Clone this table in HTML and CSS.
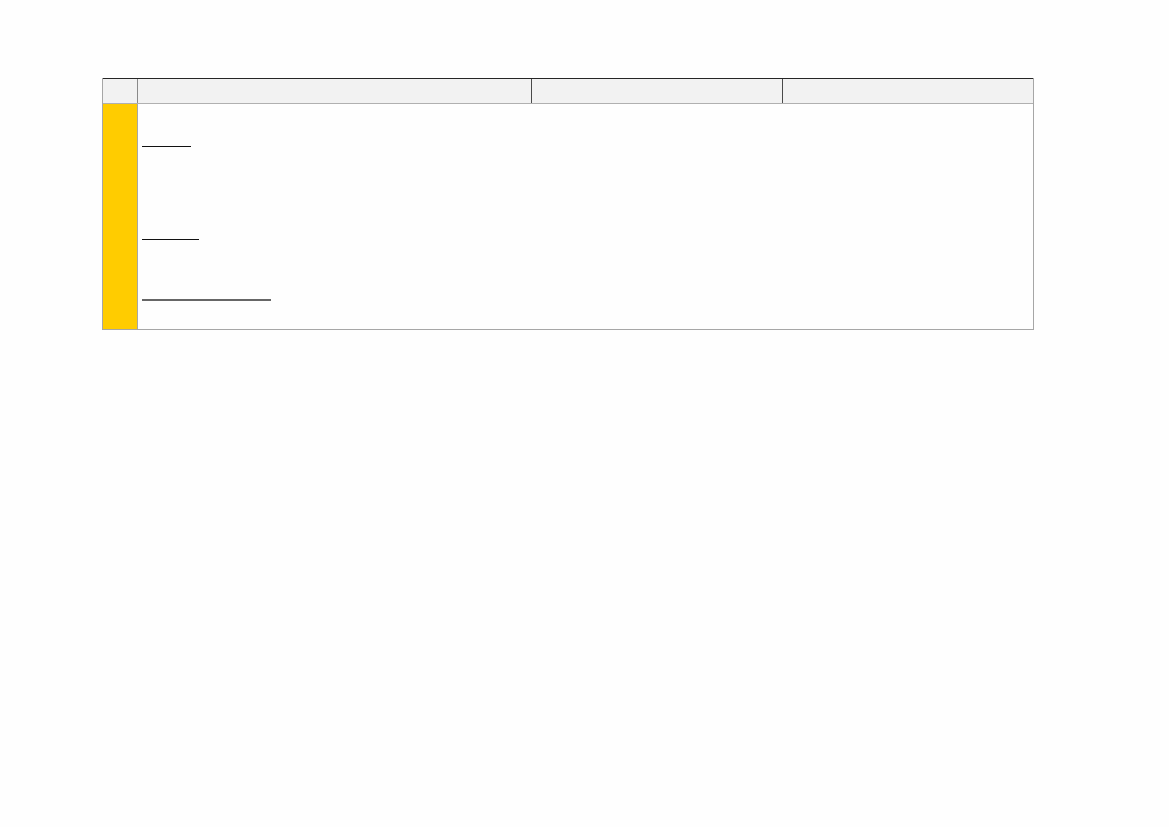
FILE: index.html
```html
<!DOCTYPE html>
<html lang="en">
<head>
<meta charset="utf-8">
<title>Sheet</title>
<link rel="stylesheet" href="styles.css">
</head>
<body>
<div class="sheet">
  <div class="head">
    <div class="hcell"></div>
    <div class="hcell"></div>
    <div class="hcell"></div>
    <div class="hcell last"></div>
  </div>
  <div class="body">
    <div class="marker"></div>
    <div class="content">
      <span class="line l1"></span>
      <span class="line l2"></span>
      <span class="line l3"></span>
    </div>
  </div>
</div>
</body>
</html>
```
FILE: styles.css
```css
html, body {
  margin: 0;
  padding: 0;
  background: #fefefe;
  font-family: "Liberation Sans", Arial, sans-serif;
}
.sheet {
  margin: 78px 0 0 102px;
  width: 930px;
  border-left: 1px solid #a6a6a6;
  border-right: 1px solid #a6a6a6;
  border-bottom: 1px solid #a6a6a6;
}
.head {
  display: grid;
  grid-template-columns: 35px 394px 251px 1fr;
  height: 24px;
  border-top: 1px solid #262626;
  border-bottom: 1px solid #b0b0b0;
  background: #f2f2f2;
}
.hcell {
  border-right: 1px solid #4a4a4a;
}
.hcell:first-child {
  border-right-color: #8a8a8a;
}
.hcell.last {
  border-right: none;
}
.body {
  display: grid;
  grid-template-columns: 35px 1fr;
  height: 225px;
}
.marker {
  background: #ffcc00;
  border-right: 1px solid #a6a6a6;
}
.content {
  display: flex;
  flex-direction: column;
  align-items: flex-start;
  padding-left: 4px;
}
.line {
  display: block;
  height: 0;
}
.l1 {
  width: 49px;
  margin-top: 42px;
  border-bottom: 1px solid #111;
}
.l2 {
  width: 57px;
  margin-top: 92px;
  border-bottom: 1px solid #111;
}
.l3 {
  width: 129px;
  margin-top: 59px;
  border-bottom: 2px solid #666;
}
```
